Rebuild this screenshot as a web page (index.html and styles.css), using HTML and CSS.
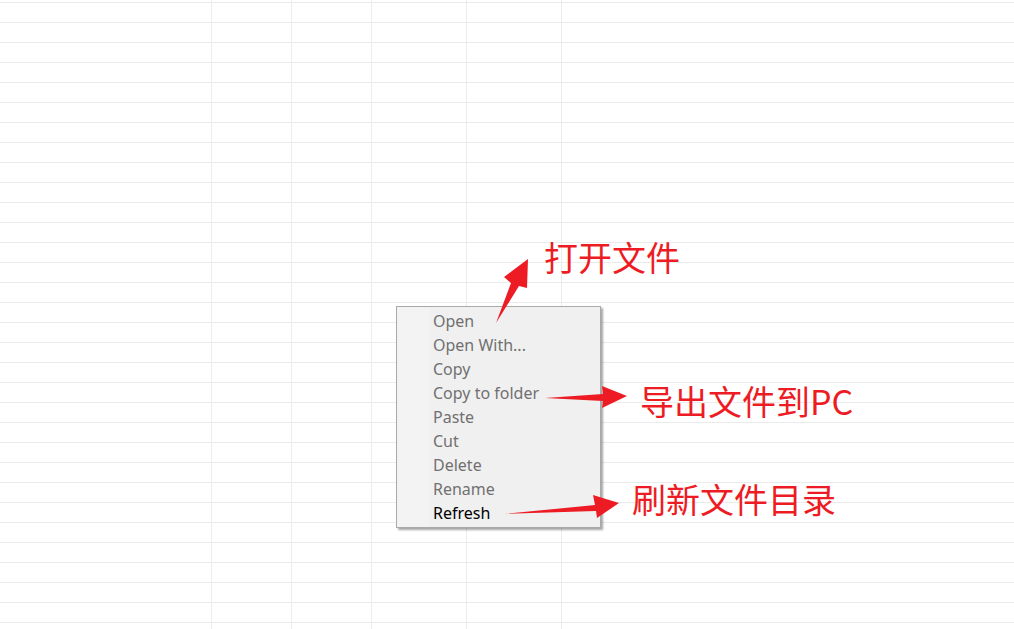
FILE: index.html
```html
<!DOCTYPE html>
<html lang="zh-CN">
<head>
<meta charset="utf-8">
<title>Context menu</title>
<link rel="stylesheet" href="styles.css">
</head>
<body>
<div class="sheet">
  <div class="col c1"></div>
  <div class="col c2"></div>
  <div class="col c3"></div>
  <div class="col c4"></div>
  <div class="col c5"></div>
  <div class="col c6"></div>
</div>

<ul class="menu">
  <li class="gray">Open</li>
  <li class="gray">Open With...</li>
  <li class="gray">Copy</li>
  <li class="gray">Copy to folder</li>
  <li class="gray">Paste</li>
  <li class="gray">Cut</li>
  <li class="gray">Delete</li>
  <li class="gray">Rename</li>
  <li class="active">Refresh</li>
</ul>

<svg class="arrows" width="1014" height="629" viewBox="0 0 1014 629">
  <polygon fill="#ed1c24" points="496,323 511,283 504,277 528,259 527,288 519,286"/>
  <polygon fill="#ed1c24" points="545,398 603,394 602,386 627,396 602,408 603,401"/>
  <polygon fill="#ed1c24" points="504,514 595,505 593,495 619,503 597,518 596,511"/>
</svg>

<div class="label l1">打开文件</div>
<div class="label l2">导出文件到PC</div>
<div class="label l3">刷新文件目录</div>
</body>
</html>
```
FILE: styles.css
```css
html, body {
  margin: 0;
  padding: 0;
  width: 1014px;
  height: 629px;
  overflow: hidden;
  background: #ffffff;
}

.sheet {
  display: flex;
  width: 1014px;
  height: 629px;
  background-image: repeating-linear-gradient(to bottom,
    transparent 0px, transparent 2px,
    #ebebeb 2px, #ebebeb 3px,
    transparent 3px, transparent 20px);
}

.col {
  height: 100%;
  border-right: 1px solid #ececec;
  box-sizing: border-box;
}
.c1 { width: 212px; }
.c2 { width: 80px; }
.c3 { width: 80px; }
.c4 { width: 95px; }
.c5 { width: 95px; }
.c6 { flex: 1; border-right: none; }

.menu {
  position: absolute;
  left: 396px;
  top: 306px;
  width: 205px;
  height: 222px;
  margin: 0;
  padding: 2px 0 0 0;
  list-style: none;
  box-sizing: border-box;
  background: linear-gradient(to right, #f3f3f3 0, #f3f3f3 33px, #f0f0f0 33px);
  border: 1px solid #a9a9a9;
  box-shadow: 2px 2px 2px rgba(0,0,0,0.35);
  font-family: "Noto Sans", "Open Sans", sans-serif;
  font-size: 16px;
}

.menu li {
  height: 24px;
  line-height: 24px;
  padding-left: 36px;
  white-space: nowrap;
}
.menu .gray { color: #707070; }
.menu .active { color: #000000; }

.arrows {
  position: absolute;
  left: 0;
  top: 0;
}

.label {
  position: absolute;
  color: #ed1c24;
  font-family: "Noto Sans CJK SC", "Noto Sans", sans-serif;
  font-size: 34px;
  line-height: 40px;
  white-space: nowrap;
}
.l1 { left: 544px; top: 237px; }
.l2 { left: 640px; top: 381px; }
.l3 { left: 632px; top: 479px; }
```
